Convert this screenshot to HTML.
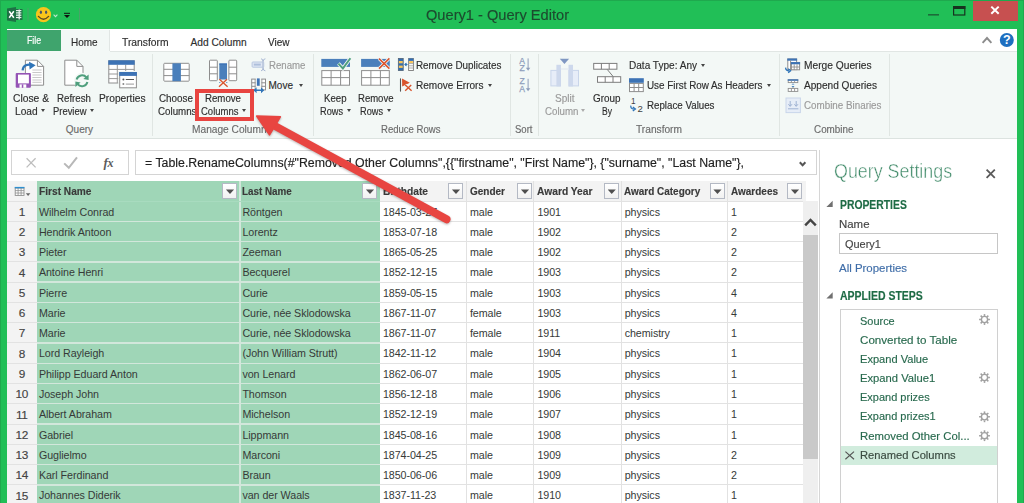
<!DOCTYPE html>
<html><head><meta charset="utf-8">
<style>
*{margin:0;padding:0;box-sizing:border-box}
html,body{width:1024px;height:503px;overflow:hidden;background:#21bf57;font-family:"Liberation Sans",sans-serif;}
.a{position:absolute}
.t{position:absolute;white-space:nowrap;line-height:normal;-webkit-text-stroke:0.15px;transform-origin:0 50%}
.sep{position:absolute;top:53.5px;width:1px;height:82px;background:#e0e6e3}
.dd{position:absolute;top:183px;width:15.3px;height:15.5px;background:linear-gradient(#fff,#f1f1f1);border:1px solid #b4b9c4}
.dd:after{content:"";position:absolute;left:2.9px;top:5.4px;width:8.2px;height:4.6px;background:#4f4f4f;clip-path:polygon(0 0,100% 0,50% 100%)}
.car{position:absolute;width:0;height:0;border:2.5px solid transparent;border-top:3px solid #444;border-bottom:0}
svg{position:absolute;overflow:visible}
</style></head><body>
<!-- title bar -->
<div class="a" style="left:0;top:0;width:1024px;height:1px;background:#1fa94e"></div>
<div class="a" style="left:0;top:0;width:1px;height:503px;background:#1fa94e"></div>
<div class="a" style="left:1023px;top:0;width:1px;height:503px;background:#1fa94e"></div>
<div class="a" style="left:973px;top:1px;width:45px;height:19.7px;background:#c75050"></div>
<div class="a" style="left:7px;top:29.3px;width:1010px;height:474px;background:#fff"></div>
<!-- tabs -->
<div class="a" style="left:7px;top:29.5px;width:54px;height:21.2px;background:#3fa46d"></div>
<div class="a" style="left:61px;top:30px;width:49px;height:22px;background:#f3f8f6;border-right:1px solid #e1e6e4"></div>
<!-- ribbon -->
<div class="a" style="left:7px;top:51px;width:1010px;height:88px;background:#f3f8f6;border-bottom:1px solid #dce3e0"></div>
<div class="a" style="left:110px;top:51px;width:907px;height:1px;background:#e1e6e4"></div>
<div class="sep" style="left:152px"></div>
<div class="sep" style="left:313px"></div>
<div class="sep" style="left:510px"></div>
<div class="sep" style="left:538.3px"></div>
<div class="sep" style="left:779.3px"></div>
<div class="sep" style="left:889px"></div>
<!-- formula bar -->
<div class="a" style="left:11px;top:150px;width:118px;height:25px;border:1px solid #d4d4d4;background:#fff"></div>
<div class="a" style="left:135px;top:150px;width:682px;height:25px;border:1px solid #d4d4d4;background:#fff"></div>
<!-- table -->
<div class="a" style="left:7px;top:181px;width:799px;height:20px;background:#f3f3f3"></div>
<div class="a" style="left:7px;top:201px;width:30px;height:302px;background:#f3f3f3"></div>
<div class="a" style="left:37px;top:181px;width:343px;height:322px;background:#9fd6b7"></div>
<div class="a" style="left:7px;top:220.78px;width:796px;height:1px;background:#e2e2e2"></div>
<div class="a" style="left:37px;top:220.58px;width:343px;height:1.4px;background:#d2e7db"></div>
<div class="a" style="left:7px;top:241.06px;width:796px;height:1px;background:#e2e2e2"></div>
<div class="a" style="left:37px;top:240.86px;width:343px;height:1.4px;background:#d2e7db"></div>
<div class="a" style="left:7px;top:261.34px;width:796px;height:1px;background:#e2e2e2"></div>
<div class="a" style="left:37px;top:261.14px;width:343px;height:1.4px;background:#d2e7db"></div>
<div class="a" style="left:7px;top:281.62px;width:796px;height:1px;background:#e2e2e2"></div>
<div class="a" style="left:37px;top:281.42px;width:343px;height:1.4px;background:#d2e7db"></div>
<div class="a" style="left:7px;top:301.90px;width:796px;height:1px;background:#e2e2e2"></div>
<div class="a" style="left:37px;top:301.70px;width:343px;height:1.4px;background:#d2e7db"></div>
<div class="a" style="left:7px;top:322.18px;width:796px;height:1px;background:#e2e2e2"></div>
<div class="a" style="left:37px;top:321.98px;width:343px;height:1.4px;background:#d2e7db"></div>
<div class="a" style="left:7px;top:342.46px;width:796px;height:1px;background:#e2e2e2"></div>
<div class="a" style="left:37px;top:342.26px;width:343px;height:1.4px;background:#d2e7db"></div>
<div class="a" style="left:7px;top:362.74px;width:796px;height:1px;background:#e2e2e2"></div>
<div class="a" style="left:37px;top:362.54px;width:343px;height:1.4px;background:#d2e7db"></div>
<div class="a" style="left:7px;top:383.02px;width:796px;height:1px;background:#e2e2e2"></div>
<div class="a" style="left:37px;top:382.82px;width:343px;height:1.4px;background:#d2e7db"></div>
<div class="a" style="left:7px;top:403.30px;width:796px;height:1px;background:#e2e2e2"></div>
<div class="a" style="left:37px;top:403.10px;width:343px;height:1.4px;background:#d2e7db"></div>
<div class="a" style="left:7px;top:423.58px;width:796px;height:1px;background:#e2e2e2"></div>
<div class="a" style="left:37px;top:423.38px;width:343px;height:1.4px;background:#d2e7db"></div>
<div class="a" style="left:7px;top:443.86px;width:796px;height:1px;background:#e2e2e2"></div>
<div class="a" style="left:37px;top:443.66px;width:343px;height:1.4px;background:#d2e7db"></div>
<div class="a" style="left:7px;top:464.14px;width:796px;height:1px;background:#e2e2e2"></div>
<div class="a" style="left:37px;top:463.94px;width:343px;height:1.4px;background:#d2e7db"></div>
<div class="a" style="left:7px;top:484.42px;width:796px;height:1px;background:#e2e2e2"></div>
<div class="a" style="left:37px;top:484.22px;width:343px;height:1.4px;background:#d2e7db"></div>
<div class="a" style="left:7px;top:504.70px;width:796px;height:1px;background:#e2e2e2"></div>
<div class="a" style="left:37px;top:504.50px;width:343px;height:1.4px;background:#d2e7db"></div>
<div class="a" style="left:465.50px;top:181px;width:1px;height:322px;background:#e2e2e2"></div>
<div class="a" style="left:533.25px;top:181px;width:1px;height:322px;background:#e2e2e2"></div>
<div class="a" style="left:620.75px;top:181px;width:1px;height:322px;background:#e2e2e2"></div>
<div class="a" style="left:726.75px;top:181px;width:1px;height:322px;background:#e2e2e2"></div>
<div class="a" style="left:239.3px;top:181px;width:1.4px;height:322px;background:#d2e7db"></div>
<div class="a" style="left:7px;top:200.5px;width:796px;height:1px;background:#e2e2e2"></div>
<div class="a" style="left:37px;top:200.5px;width:343px;height:1px;background:#a8dbbf"></div>
<div class="dd" style="left:222px"></div>
<div class="dd" style="left:362px"></div>
<div class="dd" style="left:448px"></div>
<div class="dd" style="left:517px"></div>
<div class="dd" style="left:603.75px"></div>
<div class="dd" style="left:709.5px"></div>
<div class="dd" style="left:787px"></div>
<div class="car" style="left:41.0px;top:109.3px"></div>
<div class="car" style="left:90.0px;top:109.3px"></div>
<div class="car" style="left:241.9px;top:109.3px"></div>
<div class="car" style="left:347.3px;top:109.3px"></div>
<div class="car" style="left:386.5px;top:109.3px"></div>
<div class="car" style="left:298.5px;top:83.8px"></div>
<div class="car" style="left:488.0px;top:83.8px"></div>
<div class="car" style="left:700.5px;top:63.8px"></div>
<div class="car" style="left:767.3px;top:83.8px"></div>
<div class="car" style="left:581.2px;top:109.3px;border-top-color:#aaa"></div>
<!-- scrollbar -->
<div class="a" style="left:803px;top:201px;width:15px;height:302px;background:#efefef"></div>
<div class="a" style="left:803px;top:235px;width:15px;height:224px;background:#c9c9c9"></div>
<!-- panel -->
<div class="a" style="left:819px;top:150px;width:1px;height:353px;background:#d6d6d6"></div>
<div class="a" style="left:839px;top:233px;width:159px;height:21px;border:1px solid #c6c6c6;background:#fff"></div>
<div class="a" style="left:840px;top:309px;width:158px;height:200px;border:1px solid #d0d0d0;background:#fff"></div>
<div class="a" style="left:841px;top:446.2px;width:156px;height:18.4px;background:#d1ecdd"></div>
<svg class="a" style="left:0;top:0" width="1024" height="503" viewBox="0 0 1024 503">
<!-- excel icon -->
<g>
<rect x="15" y="9" width="7.3" height="11" fill="#1e7145"/>
<g stroke="#f0f8f3" stroke-width="1.25" opacity="0.95">
<line x1="16" y1="10.6" x2="22" y2="10.6"/><line x1="16" y1="12.9" x2="22" y2="12.9"/><line x1="16" y1="15.2" x2="22" y2="15.2"/><line x1="16" y1="17.5" x2="22" y2="17.5"/><line x1="19.2" y1="9.5" x2="19.2" y2="19.5"/>
</g>
<rect x="21.4" y="9" width="0.9" height="11" fill="#1e7145"/>
<path d="M7 8.6 L16 6.9 L16 22 L7 20.4 Z" fill="#1e7145"/>
<path d="M9.2 11.2 L13.8 17.8 M13.8 11.2 L9.2 17.8" stroke="#fff" stroke-width="1.5" fill="none"/>
</g>
<!-- qat separators -->
<rect x="27.5" y="8" width="1" height="13.5" fill="#48a468"/>
<rect x="79" y="8" width="1" height="13.5" fill="#48a468"/>
<!-- smiley -->
<circle cx="43.5" cy="14.7" r="7.6" fill="#f9c51b"/>
<ellipse cx="40.9" cy="12.3" rx="1.1" ry="1.7" fill="#4a5568"/>
<ellipse cx="46.1" cy="12.3" rx="1.1" ry="1.7" fill="#4a5568"/>
<path d="M38.4 16.4 Q43.5 22 48.6 16.4" stroke="#5a4a20" stroke-width="1.4" fill="none" stroke-linecap="round"/>
<path d="M53.6 14.6 L55.5 16.6 L57.4 14.6" stroke="#bfe8cd" stroke-width="1.1" fill="none"/>
<rect x="64" y="12.8" width="6" height="1" fill="#111"/>
<path d="M64 15 L70 15 L67 18 Z" fill="#111"/>
<!-- window controls -->
<rect x="928" y="14" width="11" height="1.6" fill="#1d6b3a"/>
<rect x="953.6" y="6.6" width="11.2" height="8.4" fill="none" stroke="#17321f" stroke-width="1.2"/>
<rect x="953" y="6" width="12.4" height="3" fill="#17321f"/>
<path d="M991.3 6.6 L998.7 13.8 M998.7 6.6 L991.3 13.8" stroke="#fff" stroke-width="2" fill="none"/>
<!-- collapse caret & help -->
<path d="M982.6 42.8 L987 38 L991.4 42.8" stroke="#8c8c8c" stroke-width="1.9" fill="none"/>
<circle cx="1006.8" cy="40" r="7" fill="#1e6fc0"/>
<text x="1006.8" y="44.4" font-family="Liberation Sans" font-weight="bold" font-size="12.5" fill="#fff" text-anchor="middle">?</text>

<!-- Close & Load -->
<path d="M25.4 60.2 H37.4 L43.6 66.4 V85.2 H25.4 Z" fill="#fff" stroke="#8e8e8e" stroke-width="1"/>
<path d="M37.4 60.2 V66.4 H43.6" fill="none" stroke="#8e8e8e" stroke-width="1"/>
<g stroke="#c9c9c9" stroke-width="1"><line x1="32.4" y1="70" x2="41.6" y2="70"/><line x1="32.4" y1="72.5" x2="41.6" y2="72.5"/><line x1="32.4" y1="75" x2="41.6" y2="75"/><line x1="32.4" y1="77.5" x2="41.6" y2="77.5"/><line x1="32.4" y1="80" x2="41.6" y2="80"/><line x1="32.4" y1="82.3" x2="41.6" y2="82.3"/></g>
<rect x="15.7" y="72.9" width="15.2" height="14.9" rx="1" fill="#9454b5"/>
<rect x="18" y="74.6" width="10.9" height="8.8" fill="#fff"/>
<rect x="19.5" y="84.4" width="6.8" height="3.4" fill="#fff"/>
<rect x="21.8" y="84.4" width="1.5" height="3.4" fill="#9454b5"/>
<path d="M22.6 70.4 C23 65.5 27 64.2 30.5 64.6" fill="none" stroke="#2f74b8" stroke-width="2.2"/>
<path d="M29 61.8 L35.6 65.3 L29.6 69.6 Z" fill="#2f74b8"/>

<!-- Refresh Preview -->
<path d="M64.8 60.2 H76.8 L83 66.4 V85.2 H64.8 Z" fill="#fff" stroke="#8e8e8e" stroke-width="1"/>
<path d="M76.8 60.2 V66.4 H83" fill="none" stroke="#8e8e8e" stroke-width="1"/>
<circle cx="82" cy="80.8" r="8" fill="#f3f8f6"/>
<path d="M76.6 79.6 A5.6 5.6 0 0 1 86.4 77.4" fill="none" stroke="#4f9f7d" stroke-width="2"/>
<path d="M88.6 74.6 L88.6 80 L83.4 79 Z" fill="#4f9f7d"/>
<path d="M87.4 82 A5.6 5.6 0 0 1 77.6 84.2" fill="none" stroke="#4f9f7d" stroke-width="2"/>
<path d="M75.4 87 L75.4 81.6 L80.6 82.6 Z" fill="#4f9f7d"/>

<!-- Properties -->
<rect x="108.8" y="60.8" width="25.4" height="22.2" fill="#fff" stroke="#8e8e8e" stroke-width="1"/>
<g stroke="#9a9a9a" stroke-width="1"><line x1="117.3" y1="64.7" x2="117.3" y2="83"/><line x1="125.7" y1="64.7" x2="125.7" y2="83"/><line x1="108.8" y1="69.4" x2="134.2" y2="69.4"/><line x1="108.8" y1="74" x2="134.2" y2="74"/><line x1="108.8" y1="78.6" x2="134.2" y2="78.6"/></g>
<rect x="108.3" y="60.3" width="26.4" height="4.5" fill="#3d73b5"/>
<rect x="118.2" y="71" width="19.7" height="18.3" fill="#f3f8f6"/>
<rect x="119.7" y="72.5" width="16.7" height="15.3" fill="#fff" stroke="#8e8e8e" stroke-width="1"/>
<rect x="119.2" y="72" width="17.7" height="3.9" fill="#3d73b5"/>
<circle cx="123.4" cy="79.5" r="1" fill="#555"/><circle cx="123.4" cy="84.1" r="1" fill="#888"/>
<line x1="125.8" y1="79.5" x2="134" y2="79.5" stroke="#555" stroke-width="1"/>
<line x1="125.8" y1="84.1" x2="134" y2="84.1" stroke="#999" stroke-width="1"/>

<!-- Choose Columns -->
<rect x="163.8" y="63.3" width="25.4" height="17.9" rx="0.8" fill="#fff" stroke="#8e8e8e" stroke-width="1"/>
<g stroke="#8e8e8e" stroke-width="1"><line x1="163.8" y1="69.3" x2="189.2" y2="69.3"/><line x1="163.8" y1="75.6" x2="189.2" y2="75.6"/></g>
<rect x="172.4" y="63.3" width="8.5" height="17.9" fill="#4a7fbb"/>

<!-- Remove Columns -->
<rect x="209.5" y="60.2" width="7.8" height="20.5" rx="0.8" fill="#fff" stroke="#8e8e8e" stroke-width="1"/>
<rect x="228.9" y="60.2" width="7.8" height="20.5" rx="0.8" fill="#fff" stroke="#8e8e8e" stroke-width="1"/>
<g stroke="#8e8e8e" stroke-width="1"><line x1="209.5" y1="67.2" x2="217.3" y2="67.2"/><line x1="209.5" y1="73.8" x2="217.3" y2="73.8"/><line x1="228.9" y1="67.2" x2="236.7" y2="67.2"/><line x1="228.9" y1="73.8" x2="236.7" y2="73.8"/></g>
<rect x="219.3" y="63.5" width="7.7" height="16" fill="#4a7fbb"/>
<rect x="219.3" y="63.5" width="7.7" height="1.2" fill="#3d73b5"/>
<path d="M219.4 79.2 L227.6 86.8 M227 79.2 L219 86.8" stroke="#d9532c" stroke-width="1.3" fill="none"/>
<rect x="219.3" y="82" width="1" height="1" fill="#4a7fbb"/><rect x="226.3" y="82" width="1" height="1" fill="#4a7fbb"/>

<!-- Rename -->
<rect x="252.1" y="62" width="12" height="5.2" rx="0.8" fill="#dfe7f3" stroke="#b7c7e0" stroke-width="1"/>
<rect x="253.8" y="63.6" width="7" height="2" fill="#aebfdb"/>
<path d="M261 58.8 Q263 59 263 61 V68.6 Q263 70.6 261 70.8 M265.4 58.8 Q263.2 59 263.2 61 M265.4 70.8 Q263.2 70.6 263.2 68.6" stroke="#aab9d4" stroke-width="1" fill="none"/>
<rect x="262.6" y="61" width="2.6" height="7" fill="#f3f8f6" opacity="0.6"/>
<line x1="263.1" y1="60" x2="263.1" y2="69.6" stroke="#aab9d4" stroke-width="1"/>

<!-- Move -->
<rect x="251.7" y="79.1" width="13.8" height="10.8" fill="#fff" stroke="#8e8e8e" stroke-width="1"/>
<g stroke="#8e8e8e" stroke-width="1"><line x1="255.2" y1="79" x2="255.2" y2="90"/><line x1="261.8" y1="79" x2="261.8" y2="90"/><line x1="251.7" y1="82.8" x2="265.5" y2="82.8"/><line x1="251.7" y1="86.3" x2="265.5" y2="86.3"/></g>
<rect x="255.8" y="78" width="5.4" height="13" fill="#f3f8f6"/>
<rect x="256.9" y="78.4" width="2.8" height="7.4" fill="#3d73b5"/>
<path d="M253.4 90.2 L256.6 87.2 V89.4 H261 V87.2 L264.2 90.2 L261 93.2 V91 H256.6 V93.2 Z" fill="#2f74b8"/>

<!-- Keep Rows -->
<rect x="321.3" y="58.9" width="28.7" height="8" fill="#4a7fbb"/>
<rect x="321.8" y="70.6" width="27.7" height="14.6" fill="#fff" stroke="#8e8e8e" stroke-width="1"/>
<g stroke="#8e8e8e" stroke-width="1"><line x1="331.1" y1="70.6" x2="331.1" y2="85.2"/><line x1="340.6" y1="70.6" x2="340.6" y2="85.2"/><line x1="321.8" y1="77.6" x2="349.5" y2="77.6"/></g>
<path d="M338.4 63.6 L342.9 68.4 L350.4 58.2" stroke="#f3f8f6" stroke-width="3.6" fill="none"/>
<path d="M338.4 63.6 L342.9 68.4 L350.4 58.2" stroke="#4f9f7d" stroke-width="1.9" fill="none"/>

<!-- Remove Rows -->
<rect x="361.1" y="58.9" width="28.7" height="8" fill="#4a7fbb"/>
<rect x="361.6" y="70.6" width="27.7" height="14.6" fill="#fff" stroke="#8e8e8e" stroke-width="1"/>
<g stroke="#8e8e8e" stroke-width="1"><line x1="370.9" y1="70.6" x2="370.9" y2="85.2"/><line x1="380.4" y1="70.6" x2="380.4" y2="85.2"/><line x1="361.6" y1="77.6" x2="389.3" y2="77.6"/></g>
<path d="M379 58.6 L389.4 68.6 M389.4 58.4 L379 68.6" stroke="#f3f8f6" stroke-width="3.2" fill="none"/>
<path d="M379 58.6 L389.4 68.6 M389.4 58.4 L379 68.6" stroke="#d9532c" stroke-width="1.5" fill="none"/>
</svg>
<svg class="a" style="left:0;top:0" width="1024" height="503" viewBox="0 0 1024 503">
<!-- Remove Duplicates -->
<rect x="398.4" y="58.5" width="4.8" height="12" fill="#2f6db5" stroke="#54697f" stroke-width="0.9"/>
<rect x="398.9" y="61" width="3.8" height="2.3" fill="#f7c55c"/><rect x="398.9" y="65.6" width="3.8" height="2.3" fill="#f7c55c"/>
<rect x="408.6" y="58.5" width="4.8" height="12" fill="#fff" stroke="#7a7a7a" stroke-width="0.9"/>
<rect x="408.6" y="58.5" width="4.8" height="2.4" fill="#2f6db5"/>
<rect x="409.1" y="61" width="3.8" height="2.3" fill="#f7c55c"/>
<line x1="408.6" y1="63.6" x2="413.4" y2="63.6" stroke="#9a9a9a" stroke-width="0.8"/><line x1="408.6" y1="65.8" x2="413.4" y2="65.8" stroke="#9a9a9a" stroke-width="0.8"/><line x1="408.6" y1="68" x2="413.4" y2="68" stroke="#9a9a9a" stroke-width="0.8"/>
<path d="M405.6 64.5 H407.6 M406.2 63.2 L404.6 64.5 L406.2 65.8 Z" stroke="#2f74b8" stroke-width="0.9" fill="#2f74b8"/>
<!-- Remove Errors -->
<line x1="400.5" y1="78.4" x2="400.5" y2="91.6" stroke="#555" stroke-width="1.1"/>
<path d="M402 78.6 L409.8 82.8 L402.2 86.6 Z" fill="#d9532c"/>
<path d="M405 84.8 L411.6 90.8 M411.2 85 L405.2 90.8" stroke="#f3f8f6" stroke-width="3" fill="none"/>
<path d="M405 84.8 L411.6 90.8 M411.2 85 L405.2 90.8" stroke="#d9532c" stroke-width="1.4" fill="none"/>

<!-- Sort icons -->
<g font-family="Liberation Sans" font-size="8.6" fill="#8d9dbb" text-anchor="middle" stroke="#8d9dbb" stroke-width="0.25">
<text x="522.1" y="64.1">A</text><text x="522.1" y="71.3">Z</text>
<text x="522.1" y="83.7">Z</text><text x="522.1" y="91.6">A</text>
</g>
<path d="M528.1 58.4 V69" stroke="#8d9dbb" stroke-width="1" fill="none"/><path d="M525.9 67.8 H530.3 L528.1 70.8 Z" fill="#8d9dbb"/>
<path d="M528.1 78.8 V89.4" stroke="#8d9dbb" stroke-width="1" fill="none"/><path d="M525.9 88.2 H530.3 L528.1 91.2 Z" fill="#8d9dbb"/>

<!-- Split Column -->
<rect x="550.9" y="70.4" width="9.5" height="15.5" fill="#e7edf8" stroke="#c9d5ea" stroke-width="1"/>
<rect x="569" y="70.4" width="9.5" height="15.5" fill="#e7edf8" stroke="#c9d5ea" stroke-width="1"/>
<rect x="556.4" y="64.8" width="4.5" height="21.6" fill="#cdd8ec"/>
<rect x="568.5" y="64.8" width="4.5" height="21.6" fill="#cdd8ec"/>
<path d="M559.8 58.8 H569.1 L564.45 64 Z" fill="#7f97c2"/>
<line x1="561" y1="69" x2="568.5" y2="69" stroke="#dfe6f0" stroke-width="1"/>

<!-- Group By -->
<rect x="593.7" y="63.4" width="23.2" height="5.8" fill="#fff" stroke="#7d7d7d" stroke-width="1"/>
<line x1="601.4" y1="63.4" x2="601.4" y2="69.2" stroke="#7d7d7d"/><line x1="609.2" y1="63.4" x2="609.2" y2="69.2" stroke="#7d7d7d"/>
<rect x="597.5" y="76.7" width="23.2" height="5.6" fill="#fff" stroke="#7d7d7d" stroke-width="1"/>
<line x1="605.2" y1="76.7" x2="605.2" y2="82.3" stroke="#7d7d7d"/><line x1="613" y1="76.7" x2="613" y2="82.3" stroke="#7d7d7d"/>
<line x1="607.2" y1="69.4" x2="613.2" y2="76.6" stroke="#7d7d7d" stroke-width="1"/>

<!-- Use first row -->
<rect x="629.5" y="83.4" width="13.8" height="8.2" fill="#fff" stroke="#8e8e8e" stroke-width="1"/>
<g stroke="#8e8e8e" stroke-width="1"><line x1="634.1" y1="83.4" x2="634.1" y2="91.6"/><line x1="638.7" y1="83.4" x2="638.7" y2="91.6"/><line x1="629.5" y1="87.5" x2="643.3" y2="87.5"/></g>
<rect x="629" y="78.2" width="14.8" height="4.6" fill="#3d73b5"/>

<!-- Replace values -->
<g font-family="Liberation Sans" fill="#3f3f3f">
<text x="630.9" y="104.3" font-size="8.2">1</text>
<text x="637.4" y="111.5" font-size="9.6">2</text>
</g>
<path d="M630.8 105.6 Q630.6 109 633.6 109 M632.8 107 L635.4 109 L632.8 111" stroke="#2f74b8" stroke-width="1.3" fill="none"/>

<!-- Merge queries -->
<rect x="787.8" y="59" width="8.8" height="10.6" fill="#fff" stroke="#8e8e8e" stroke-width="1"/>
<rect x="787.3" y="58.5" width="9.8" height="2.2" fill="#3d73b5"/>
<line x1="790.6" y1="60.5" x2="790.6" y2="69.6" stroke="#8e8e8e"/>
<rect x="791.4" y="62.6" width="8.2" height="7.2" fill="#fff" stroke="#8e8e8e" stroke-width="1"/>
<rect x="790.9" y="62.1" width="9.2" height="2.2" fill="#3d73b5"/>
<g stroke="#8e8e8e" stroke-width="0.9"><line x1="794.2" y1="64.3" x2="794.2" y2="69.8"/><line x1="797" y1="64.3" x2="797" y2="69.8"/><line x1="791.4" y1="67" x2="799.6" y2="67"/></g>
<path d="M785.6 67.6 Q785.8 70.8 789 70.8 M788.2 68.8 L790.6 70.8 L788.2 72.8" stroke="#2f74b8" stroke-width="1.3" fill="none"/>

<!-- Append queries -->
<rect x="788.2" y="79.8" width="9.6" height="2.8" fill="#fff" stroke="#8e8e8e" stroke-width="0.9"/>
<rect x="787.7" y="79.3" width="10.6" height="1.5" fill="#3d73b5"/>
<line x1="791.4" y1="80.8" x2="791.4" y2="82.6" stroke="#8e8e8e" stroke-width="0.9"/><line x1="794.6" y1="80.8" x2="794.6" y2="82.6" stroke="#8e8e8e" stroke-width="0.9"/>
<path d="M791.4 84.6 L793 83.4 L794.6 84.6 Z M791.4 86 L793 87.2 L794.6 86 Z" fill="#2f74b8"/>
<rect x="788.2" y="88.4" width="9.6" height="3" fill="#fff" stroke="#8e8e8e" stroke-width="0.9"/>
<line x1="791.4" y1="88.4" x2="791.4" y2="91.4" stroke="#8e8e8e" stroke-width="0.9"/><line x1="794.6" y1="88.4" x2="794.6" y2="91.4" stroke="#8e8e8e" stroke-width="0.9"/>
<line x1="793" y1="87" x2="793" y2="88.4" stroke="#8e8e8e" stroke-width="0.9"/>

<!-- Combine binaries -->
<rect x="786" y="98" width="14.4" height="14.6" fill="#e6edf7" stroke="#c9d6ea" stroke-width="1"/>
<path d="M790.2 101 V106 M788.4 104.2 L790.2 106.4 L792 104.2 M796.2 101 V106 M794.4 104.2 L796.2 106.4 L798 104.2" stroke="#9fb2d3" stroke-width="1" fill="none"/>
<line x1="788" y1="108.8" x2="798.4" y2="108.8" stroke="#9fb2d3" stroke-width="1"/>

<!-- formula bar icons -->
<path d="M26.6 158.2 L35.6 167.4 M35.6 158.2 L26.6 167.4" stroke="#bdbdbd" stroke-width="1.3" fill="none"/>
<path d="M64.2 163.4 L68.8 167.8 L77 157.4" stroke="#b8b8b8" stroke-width="2" fill="none"/>
<text x="103.6" y="167.3" font-family="Liberation Serif" font-style="italic" font-weight="bold" font-size="13" fill="#5c5c5c">f</text>
<text x="107.6" y="167.3" font-family="Liberation Serif" font-style="italic" font-weight="bold" font-size="12" fill="#5c5c5c">x</text>
<path d="M799.8 162.2 L802.6 165.2 L805.4 162.2" stroke="#555" stroke-width="2" fill="none"/>

<!-- table corner icon -->
<rect x="15.2" y="188" width="8.8" height="7.4" fill="#fff" stroke="#8e8e8e" stroke-width="0.9"/>
<g stroke="#8e8e8e" stroke-width="0.8"><line x1="18.1" y1="188" x2="18.1" y2="195.4"/><line x1="21.1" y1="188" x2="21.1" y2="195.4"/><line x1="15.2" y1="190.6" x2="24" y2="190.6"/><line x1="15.2" y1="193" x2="24" y2="193"/></g>
<rect x="14.7" y="186.9" width="9.8" height="1.4" fill="#2f8fd0"/>
<path d="M25.8 193.2 H30.4 L28.1 196 Z" fill="#666"/>

<!-- scrollbar chevron -->
<path d="M805.2 225.4 L810.5 220 L815.8 225.4" stroke="#444" stroke-width="2.4" fill="none"/>

<!-- panel icons -->
<path d="M986.6 169.6 L994.8 177.8 M994.8 169.6 L986.6 177.8" stroke="#5a5a5a" stroke-width="1.8" fill="none"/>
<path d="M832.7 200.8 V207.1 H826.4 Z" fill="#707070"/>
<path d="M832.7 292.2 V298.5 H826.4 Z" fill="#707070"/>
<path d="M845.4 451.6 L854 459.2 M854 451.6 L845.4 459.2" stroke="#555" stroke-width="1.15" fill="none"/>
<g><circle cx="984.5" cy="319.5" r="3.1" fill="none" stroke="#a0a0a0" stroke-width="1.4"/><line x1="988.10" y1="319.50" x2="989.90" y2="319.50" stroke="#a0a0a0" stroke-width="1.6"/><line x1="987.05" y1="322.05" x2="988.32" y2="323.32" stroke="#a0a0a0" stroke-width="1.6"/><line x1="984.50" y1="323.10" x2="984.50" y2="324.90" stroke="#a0a0a0" stroke-width="1.6"/><line x1="981.95" y1="322.05" x2="980.68" y2="323.32" stroke="#a0a0a0" stroke-width="1.6"/><line x1="980.90" y1="319.50" x2="979.10" y2="319.50" stroke="#a0a0a0" stroke-width="1.6"/><line x1="981.95" y1="316.95" x2="980.68" y2="315.68" stroke="#a0a0a0" stroke-width="1.6"/><line x1="984.50" y1="315.90" x2="984.50" y2="314.10" stroke="#a0a0a0" stroke-width="1.6"/><line x1="987.05" y1="316.95" x2="988.32" y2="315.68" stroke="#a0a0a0" stroke-width="1.6"/><circle cx="984.5" cy="377.5" r="3.1" fill="none" stroke="#a0a0a0" stroke-width="1.4"/><line x1="988.10" y1="377.50" x2="989.90" y2="377.50" stroke="#a0a0a0" stroke-width="1.6"/><line x1="987.05" y1="380.05" x2="988.32" y2="381.32" stroke="#a0a0a0" stroke-width="1.6"/><line x1="984.50" y1="381.10" x2="984.50" y2="382.90" stroke="#a0a0a0" stroke-width="1.6"/><line x1="981.95" y1="380.05" x2="980.68" y2="381.32" stroke="#a0a0a0" stroke-width="1.6"/><line x1="980.90" y1="377.50" x2="979.10" y2="377.50" stroke="#a0a0a0" stroke-width="1.6"/><line x1="981.95" y1="374.95" x2="980.68" y2="373.68" stroke="#a0a0a0" stroke-width="1.6"/><line x1="984.50" y1="373.90" x2="984.50" y2="372.10" stroke="#a0a0a0" stroke-width="1.6"/><line x1="987.05" y1="374.95" x2="988.32" y2="373.68" stroke="#a0a0a0" stroke-width="1.6"/><circle cx="984.5" cy="416.8" r="3.1" fill="none" stroke="#a0a0a0" stroke-width="1.4"/><line x1="988.10" y1="416.80" x2="989.90" y2="416.80" stroke="#a0a0a0" stroke-width="1.6"/><line x1="987.05" y1="419.35" x2="988.32" y2="420.62" stroke="#a0a0a0" stroke-width="1.6"/><line x1="984.50" y1="420.40" x2="984.50" y2="422.20" stroke="#a0a0a0" stroke-width="1.6"/><line x1="981.95" y1="419.35" x2="980.68" y2="420.62" stroke="#a0a0a0" stroke-width="1.6"/><line x1="980.90" y1="416.80" x2="979.10" y2="416.80" stroke="#a0a0a0" stroke-width="1.6"/><line x1="981.95" y1="414.25" x2="980.68" y2="412.98" stroke="#a0a0a0" stroke-width="1.6"/><line x1="984.50" y1="413.20" x2="984.50" y2="411.40" stroke="#a0a0a0" stroke-width="1.6"/><line x1="987.05" y1="414.25" x2="988.32" y2="412.98" stroke="#a0a0a0" stroke-width="1.6"/><circle cx="984.5" cy="435.7" r="3.1" fill="none" stroke="#a0a0a0" stroke-width="1.4"/><line x1="988.10" y1="435.70" x2="989.90" y2="435.70" stroke="#a0a0a0" stroke-width="1.6"/><line x1="987.05" y1="438.25" x2="988.32" y2="439.52" stroke="#a0a0a0" stroke-width="1.6"/><line x1="984.50" y1="439.30" x2="984.50" y2="441.10" stroke="#a0a0a0" stroke-width="1.6"/><line x1="981.95" y1="438.25" x2="980.68" y2="439.52" stroke="#a0a0a0" stroke-width="1.6"/><line x1="980.90" y1="435.70" x2="979.10" y2="435.70" stroke="#a0a0a0" stroke-width="1.6"/><line x1="981.95" y1="433.15" x2="980.68" y2="431.88" stroke="#a0a0a0" stroke-width="1.6"/><line x1="984.50" y1="432.10" x2="984.50" y2="430.30" stroke="#a0a0a0" stroke-width="1.6"/><line x1="987.05" y1="433.15" x2="988.32" y2="431.88" stroke="#a0a0a0" stroke-width="1.6"/></g>
</svg>

<div class="t" style="left:426.00px;top:6.00px;font-size:15px;color:#1d4a2f;transform:scaleX(0.9747);">Query1 - Query Editor</div>
<div class="t" style="left:26.60px;top:35.00px;font-size:10.2px;color:#ffffff;transform:scaleX(0.8586);">File</div>
<div class="t" style="left:71.40px;top:37.00px;font-size:10.2px;color:#2e2e2e;transform:scaleX(0.9784);">Home</div>
<div class="t" style="left:122.00px;top:37.00px;font-size:10.2px;color:#2e2e2e;transform:scaleX(1.0098);">Transform</div>
<div class="t" style="left:190.50px;top:37.00px;font-size:10.2px;color:#2e2e2e;">Add Column</div>
<div class="t" style="left:268.00px;top:37.00px;font-size:10.2px;color:#2e2e2e;transform:scaleX(0.9815);">View</div>
<div class="t" style="left:13.00px;top:93.00px;font-size:10px;color:#2e2e2e;transform:scaleX(1.0281);">Close &amp;</div>
<div class="t" style="left:15.00px;top:106.00px;font-size:10px;color:#2e2e2e;transform:scaleX(1.0157);">Load</div>
<div class="t" style="left:56.50px;top:93.00px;font-size:10px;color:#2e2e2e;transform:scaleX(0.9710);">Refresh</div>
<div class="t" style="left:52.50px;top:106.00px;font-size:10px;color:#2e2e2e;transform:scaleX(0.9416);">Preview</div>
<div class="t" style="left:98.50px;top:93.00px;font-size:10px;color:#2e2e2e;transform:scaleX(1.0202);">Properties</div>
<div class="t" style="left:65.80px;top:124.00px;font-size:10px;color:#6b6b6b;">Query</div>
<div class="t" style="left:159.00px;top:93.00px;font-size:10px;color:#2e2e2e;transform:scaleX(0.9864);">Choose</div>
<div class="t" style="left:157.50px;top:106.00px;font-size:10px;color:#2e2e2e;transform:scaleX(0.9755);">Columns</div>
<div class="t" style="left:204.50px;top:93.00px;font-size:10px;color:#2e2e2e;transform:scaleX(0.9664);">Remove</div>
<div class="t" style="left:200.50px;top:106.00px;font-size:10px;color:#2e2e2e;transform:scaleX(0.9501);">Columns</div>
<div class="t" style="left:268.50px;top:60.00px;font-size:10px;color:#9a9a9a;transform:scaleX(0.9653);">Rename</div>
<div class="t" style="left:268.50px;top:80.00px;font-size:10px;color:#2e2e2e;">Move</div>
<div class="t" style="left:191.80px;top:124.00px;font-size:10px;color:#6b6b6b;transform:scaleX(1.0169);">Manage Columns</div>
<div class="t" style="left:324.00px;top:93.00px;font-size:10px;color:#2e2e2e;transform:scaleX(0.9632);">Keep</div>
<div class="t" style="left:320.00px;top:106.00px;font-size:10px;color:#2e2e2e;transform:scaleX(0.9194);">Rows</div>
<div class="t" style="left:357.50px;top:93.00px;font-size:10px;color:#2e2e2e;transform:scaleX(0.9530);">Remove</div>
<div class="t" style="left:359.50px;top:106.00px;font-size:10px;color:#2e2e2e;transform:scaleX(0.9194);">Rows</div>
<div class="t" style="left:416.00px;top:60.00px;font-size:10px;color:#2e2e2e;transform:scaleX(0.9859);">Remove Duplicates</div>
<div class="t" style="left:416.00px;top:80.00px;font-size:10px;color:#2e2e2e;transform:scaleX(1.0037);">Remove Errors</div>
<div class="t" style="left:381.00px;top:124.00px;font-size:10px;color:#6b6b6b;transform:scaleX(0.9556);">Reduce Rows</div>
<div class="t" style="left:514.50px;top:124.00px;font-size:10px;color:#6b6b6b;transform:scaleX(0.9540);">Sort</div>
<div class="t" style="left:554.50px;top:93.00px;font-size:10px;color:#9a9a9a;transform:scaleX(1.0024);">Split</div>
<div class="t" style="left:544.50px;top:106.00px;font-size:10px;color:#9a9a9a;transform:scaleX(0.9719);">Column</div>
<div class="t" style="left:593.00px;top:93.00px;font-size:10px;color:#2e2e2e;transform:scaleX(0.9893);">Group</div>
<div class="t" style="left:602.00px;top:106.00px;font-size:10px;color:#2e2e2e;transform:scaleX(0.8568);">By</div>
<div class="t" style="left:629.00px;top:60.00px;font-size:10px;color:#2e2e2e;transform:scaleX(1.0053);">Data Type: Any</div>
<div class="t" style="left:647.00px;top:80.00px;font-size:10px;color:#2e2e2e;transform:scaleX(0.9849);">Use First Row As Headers</div>
<div class="t" style="left:647.00px;top:100.00px;font-size:10px;color:#2e2e2e;transform:scaleX(0.9739);">Replace Values</div>
<div class="t" style="left:635.50px;top:124.00px;font-size:10px;color:#6b6b6b;transform:scaleX(1.0176);">Transform</div>
<div class="t" style="left:803.50px;top:60.00px;font-size:10px;color:#2e2e2e;transform:scaleX(1.0206);">Merge Queries</div>
<div class="t" style="left:803.50px;top:80.00px;font-size:10px;color:#2e2e2e;transform:scaleX(1.0099);">Append Queries</div>
<div class="t" style="left:803.50px;top:100.00px;font-size:10px;color:#9a9a9a;transform:scaleX(0.9818);">Combine Binaries</div>
<div class="t" style="left:813.50px;top:124.00px;font-size:10px;color:#6b6b6b;transform:scaleX(0.9867);">Combine</div>
<div class="t" style="left:145.00px;top:156.00px;font-size:12.3px;color:#222;transform:scaleX(1.0027);">= Table.RenameColumns(#"Removed Other Columns",{{"firstname", "First Name"}, {"surname", "Last Name"},</div>
<div class="t" style="left:38.50px;top:185.00px;font-size:10.8px;color:#3a3a3a;font-weight:bold;transform:scaleX(0.9406);">First Name</div>
<div class="t" style="left:242.00px;top:185.00px;font-size:10.8px;color:#3a3a3a;font-weight:bold;transform:scaleX(0.9110);">Last Name</div>
<div class="t" style="left:382.50px;top:185.00px;font-size:10.8px;color:#3a3a3a;font-weight:bold;transform:scaleX(0.9496);">Birthdate</div>
<div class="t" style="left:469.50px;top:185.00px;font-size:10.8px;color:#3a3a3a;font-weight:bold;transform:scaleX(0.9256);">Gender</div>
<div class="t" style="left:537.00px;top:185.00px;font-size:10.8px;color:#3a3a3a;font-weight:bold;transform:scaleX(0.9497);">Award Year</div>
<div class="t" style="left:624.25px;top:185.00px;font-size:10.8px;color:#3a3a3a;font-weight:bold;transform:scaleX(0.9230);">Award Category</div>
<div class="t" style="left:730.50px;top:185.00px;font-size:10.8px;color:#3a3a3a;font-weight:bold;transform:scaleX(0.9247);">Awardees</div>
<div class="t" style="left:38.90px;top:206.00px;font-size:10.7px;color:#363a38;letter-spacing:-0.050px;-webkit-text-stroke:0;">Wilhelm Conrad</div>
<div class="t" style="left:242.40px;top:206.00px;font-size:10.7px;color:#363a38;letter-spacing:-0.050px;-webkit-text-stroke:0;">Röntgen</div>
<div class="t" style="left:382.90px;top:206.00px;font-size:10.7px;color:#363a38;letter-spacing:-0.050px;-webkit-text-stroke:0;">1845-03-27</div>
<div class="t" style="left:469.90px;top:206.00px;font-size:10.7px;color:#363a38;letter-spacing:-0.050px;-webkit-text-stroke:0;">male</div>
<div class="t" style="left:537.40px;top:206.00px;font-size:10.7px;color:#363a38;letter-spacing:-0.050px;-webkit-text-stroke:0;">1901</div>
<div class="t" style="left:624.65px;top:206.00px;font-size:10.7px;color:#363a38;letter-spacing:-0.050px;-webkit-text-stroke:0;">physics</div>
<div class="t" style="left:730.90px;top:206.00px;font-size:10.7px;color:#363a38;letter-spacing:-0.050px;-webkit-text-stroke:0;">1</div>
<div class="t" style="left:21.80px;top:205.00px;font-size:11.8px;color:#444;letter-spacing:-0.300px;transform:translateX(-50%);">1</div>
<div class="t" style="left:38.90px;top:226.00px;font-size:10.7px;color:#363a38;letter-spacing:-0.050px;-webkit-text-stroke:0;">Hendrik Antoon</div>
<div class="t" style="left:242.40px;top:226.00px;font-size:10.7px;color:#363a38;letter-spacing:-0.050px;-webkit-text-stroke:0;">Lorentz</div>
<div class="t" style="left:382.90px;top:226.00px;font-size:10.7px;color:#363a38;letter-spacing:-0.050px;-webkit-text-stroke:0;">1853-07-18</div>
<div class="t" style="left:469.90px;top:226.00px;font-size:10.7px;color:#363a38;letter-spacing:-0.050px;-webkit-text-stroke:0;">male</div>
<div class="t" style="left:537.40px;top:226.00px;font-size:10.7px;color:#363a38;letter-spacing:-0.050px;-webkit-text-stroke:0;">1902</div>
<div class="t" style="left:624.65px;top:226.00px;font-size:10.7px;color:#363a38;letter-spacing:-0.050px;-webkit-text-stroke:0;">physics</div>
<div class="t" style="left:730.90px;top:226.00px;font-size:10.7px;color:#363a38;letter-spacing:-0.050px;-webkit-text-stroke:0;">2</div>
<div class="t" style="left:21.80px;top:225.00px;font-size:11.8px;color:#444;letter-spacing:-0.300px;transform:translateX(-50%);">2</div>
<div class="t" style="left:38.90px;top:246.00px;font-size:10.7px;color:#363a38;letter-spacing:-0.050px;-webkit-text-stroke:0;">Pieter</div>
<div class="t" style="left:242.40px;top:246.00px;font-size:10.7px;color:#363a38;letter-spacing:-0.050px;-webkit-text-stroke:0;">Zeeman</div>
<div class="t" style="left:382.90px;top:246.00px;font-size:10.7px;color:#363a38;letter-spacing:-0.050px;-webkit-text-stroke:0;">1865-05-25</div>
<div class="t" style="left:469.90px;top:246.00px;font-size:10.7px;color:#363a38;letter-spacing:-0.050px;-webkit-text-stroke:0;">male</div>
<div class="t" style="left:537.40px;top:246.00px;font-size:10.7px;color:#363a38;letter-spacing:-0.050px;-webkit-text-stroke:0;">1902</div>
<div class="t" style="left:624.65px;top:246.00px;font-size:10.7px;color:#363a38;letter-spacing:-0.050px;-webkit-text-stroke:0;">physics</div>
<div class="t" style="left:730.90px;top:246.00px;font-size:10.7px;color:#363a38;letter-spacing:-0.050px;-webkit-text-stroke:0;">2</div>
<div class="t" style="left:21.80px;top:245.00px;font-size:11.8px;color:#444;letter-spacing:-0.300px;transform:translateX(-50%);">3</div>
<div class="t" style="left:38.90px;top:266.00px;font-size:10.7px;color:#363a38;letter-spacing:-0.050px;-webkit-text-stroke:0;">Antoine Henri</div>
<div class="t" style="left:242.40px;top:266.00px;font-size:10.7px;color:#363a38;letter-spacing:-0.050px;-webkit-text-stroke:0;">Becquerel</div>
<div class="t" style="left:382.90px;top:266.00px;font-size:10.7px;color:#363a38;letter-spacing:-0.050px;-webkit-text-stroke:0;">1852-12-15</div>
<div class="t" style="left:469.90px;top:266.00px;font-size:10.7px;color:#363a38;letter-spacing:-0.050px;-webkit-text-stroke:0;">male</div>
<div class="t" style="left:537.40px;top:266.00px;font-size:10.7px;color:#363a38;letter-spacing:-0.050px;-webkit-text-stroke:0;">1903</div>
<div class="t" style="left:624.65px;top:266.00px;font-size:10.7px;color:#363a38;letter-spacing:-0.050px;-webkit-text-stroke:0;">physics</div>
<div class="t" style="left:730.90px;top:266.00px;font-size:10.7px;color:#363a38;letter-spacing:-0.050px;-webkit-text-stroke:0;">2</div>
<div class="t" style="left:21.80px;top:266.00px;font-size:11.8px;color:#444;letter-spacing:-0.300px;transform:translateX(-50%);">4</div>
<div class="t" style="left:38.90px;top:287.00px;font-size:10.7px;color:#363a38;letter-spacing:-0.050px;-webkit-text-stroke:0;">Pierre</div>
<div class="t" style="left:242.40px;top:287.00px;font-size:10.7px;color:#363a38;letter-spacing:-0.050px;-webkit-text-stroke:0;">Curie</div>
<div class="t" style="left:382.90px;top:287.00px;font-size:10.7px;color:#363a38;letter-spacing:-0.050px;-webkit-text-stroke:0;">1859-05-15</div>
<div class="t" style="left:469.90px;top:287.00px;font-size:10.7px;color:#363a38;letter-spacing:-0.050px;-webkit-text-stroke:0;">male</div>
<div class="t" style="left:537.40px;top:287.00px;font-size:10.7px;color:#363a38;letter-spacing:-0.050px;-webkit-text-stroke:0;">1903</div>
<div class="t" style="left:624.65px;top:287.00px;font-size:10.7px;color:#363a38;letter-spacing:-0.050px;-webkit-text-stroke:0;">physics</div>
<div class="t" style="left:730.90px;top:287.00px;font-size:10.7px;color:#363a38;letter-spacing:-0.050px;-webkit-text-stroke:0;">4</div>
<div class="t" style="left:21.80px;top:286.00px;font-size:11.8px;color:#444;letter-spacing:-0.300px;transform:translateX(-50%);">5</div>
<div class="t" style="left:38.90px;top:307.00px;font-size:10.7px;color:#363a38;letter-spacing:-0.050px;-webkit-text-stroke:0;">Marie</div>
<div class="t" style="left:242.40px;top:307.00px;font-size:10.7px;color:#363a38;letter-spacing:-0.050px;-webkit-text-stroke:0;">Curie, née Sklodowska</div>
<div class="t" style="left:382.90px;top:307.00px;font-size:10.7px;color:#363a38;letter-spacing:-0.050px;-webkit-text-stroke:0;">1867-11-07</div>
<div class="t" style="left:469.90px;top:307.00px;font-size:10.7px;color:#363a38;letter-spacing:-0.050px;-webkit-text-stroke:0;">female</div>
<div class="t" style="left:537.40px;top:307.00px;font-size:10.7px;color:#363a38;letter-spacing:-0.050px;-webkit-text-stroke:0;">1903</div>
<div class="t" style="left:624.65px;top:307.00px;font-size:10.7px;color:#363a38;letter-spacing:-0.050px;-webkit-text-stroke:0;">physics</div>
<div class="t" style="left:730.90px;top:307.00px;font-size:10.7px;color:#363a38;letter-spacing:-0.050px;-webkit-text-stroke:0;">4</div>
<div class="t" style="left:21.80px;top:306.00px;font-size:11.8px;color:#444;letter-spacing:-0.300px;transform:translateX(-50%);">6</div>
<div class="t" style="left:38.90px;top:327.00px;font-size:10.7px;color:#363a38;letter-spacing:-0.050px;-webkit-text-stroke:0;">Marie</div>
<div class="t" style="left:242.40px;top:327.00px;font-size:10.7px;color:#363a38;letter-spacing:-0.050px;-webkit-text-stroke:0;">Curie, née Sklodowska</div>
<div class="t" style="left:382.90px;top:327.00px;font-size:10.7px;color:#363a38;letter-spacing:-0.050px;-webkit-text-stroke:0;">1867-11-07</div>
<div class="t" style="left:469.90px;top:327.00px;font-size:10.7px;color:#363a38;letter-spacing:-0.050px;-webkit-text-stroke:0;">female</div>
<div class="t" style="left:537.40px;top:327.00px;font-size:10.7px;color:#363a38;letter-spacing:-0.050px;-webkit-text-stroke:0;">1911</div>
<div class="t" style="left:624.65px;top:327.00px;font-size:10.7px;color:#363a38;letter-spacing:-0.050px;-webkit-text-stroke:0;">chemistry</div>
<div class="t" style="left:730.90px;top:327.00px;font-size:10.7px;color:#363a38;letter-spacing:-0.050px;-webkit-text-stroke:0;">1</div>
<div class="t" style="left:21.80px;top:326.00px;font-size:11.8px;color:#444;letter-spacing:-0.300px;transform:translateX(-50%);">7</div>
<div class="t" style="left:38.90px;top:347.00px;font-size:10.7px;color:#363a38;letter-spacing:-0.050px;-webkit-text-stroke:0;">Lord Rayleigh</div>
<div class="t" style="left:242.40px;top:347.00px;font-size:10.7px;color:#363a38;letter-spacing:-0.050px;-webkit-text-stroke:0;">(John William Strutt)</div>
<div class="t" style="left:382.90px;top:347.00px;font-size:10.7px;color:#363a38;letter-spacing:-0.050px;-webkit-text-stroke:0;">1842-11-12</div>
<div class="t" style="left:469.90px;top:347.00px;font-size:10.7px;color:#363a38;letter-spacing:-0.050px;-webkit-text-stroke:0;">male</div>
<div class="t" style="left:537.40px;top:347.00px;font-size:10.7px;color:#363a38;letter-spacing:-0.050px;-webkit-text-stroke:0;">1904</div>
<div class="t" style="left:624.65px;top:347.00px;font-size:10.7px;color:#363a38;letter-spacing:-0.050px;-webkit-text-stroke:0;">physics</div>
<div class="t" style="left:730.90px;top:347.00px;font-size:10.7px;color:#363a38;letter-spacing:-0.050px;-webkit-text-stroke:0;">1</div>
<div class="t" style="left:21.80px;top:347.00px;font-size:11.8px;color:#444;letter-spacing:-0.300px;transform:translateX(-50%);">8</div>
<div class="t" style="left:38.90px;top:368.00px;font-size:10.7px;color:#363a38;letter-spacing:-0.050px;-webkit-text-stroke:0;">Philipp Eduard Anton</div>
<div class="t" style="left:242.40px;top:368.00px;font-size:10.7px;color:#363a38;letter-spacing:-0.050px;-webkit-text-stroke:0;">von Lenard</div>
<div class="t" style="left:382.90px;top:368.00px;font-size:10.7px;color:#363a38;letter-spacing:-0.050px;-webkit-text-stroke:0;">1862-06-07</div>
<div class="t" style="left:469.90px;top:368.00px;font-size:10.7px;color:#363a38;letter-spacing:-0.050px;-webkit-text-stroke:0;">male</div>
<div class="t" style="left:537.40px;top:368.00px;font-size:10.7px;color:#363a38;letter-spacing:-0.050px;-webkit-text-stroke:0;">1905</div>
<div class="t" style="left:624.65px;top:368.00px;font-size:10.7px;color:#363a38;letter-spacing:-0.050px;-webkit-text-stroke:0;">physics</div>
<div class="t" style="left:730.90px;top:368.00px;font-size:10.7px;color:#363a38;letter-spacing:-0.050px;-webkit-text-stroke:0;">1</div>
<div class="t" style="left:21.80px;top:367.00px;font-size:11.8px;color:#444;letter-spacing:-0.300px;transform:translateX(-50%);">9</div>
<div class="t" style="left:38.90px;top:388.00px;font-size:10.7px;color:#363a38;letter-spacing:-0.050px;-webkit-text-stroke:0;">Joseph John</div>
<div class="t" style="left:242.40px;top:388.00px;font-size:10.7px;color:#363a38;letter-spacing:-0.050px;-webkit-text-stroke:0;">Thomson</div>
<div class="t" style="left:382.90px;top:388.00px;font-size:10.7px;color:#363a38;letter-spacing:-0.050px;-webkit-text-stroke:0;">1856-12-18</div>
<div class="t" style="left:469.90px;top:388.00px;font-size:10.7px;color:#363a38;letter-spacing:-0.050px;-webkit-text-stroke:0;">male</div>
<div class="t" style="left:537.40px;top:388.00px;font-size:10.7px;color:#363a38;letter-spacing:-0.050px;-webkit-text-stroke:0;">1906</div>
<div class="t" style="left:624.65px;top:388.00px;font-size:10.7px;color:#363a38;letter-spacing:-0.050px;-webkit-text-stroke:0;">physics</div>
<div class="t" style="left:730.90px;top:388.00px;font-size:10.7px;color:#363a38;letter-spacing:-0.050px;-webkit-text-stroke:0;">1</div>
<div class="t" style="left:21.80px;top:387.00px;font-size:11.8px;color:#444;letter-spacing:-0.300px;transform:translateX(-50%);">10</div>
<div class="t" style="left:38.90px;top:408.00px;font-size:10.7px;color:#363a38;letter-spacing:-0.050px;-webkit-text-stroke:0;">Albert Abraham</div>
<div class="t" style="left:242.40px;top:408.00px;font-size:10.7px;color:#363a38;letter-spacing:-0.050px;-webkit-text-stroke:0;">Michelson</div>
<div class="t" style="left:382.90px;top:408.00px;font-size:10.7px;color:#363a38;letter-spacing:-0.050px;-webkit-text-stroke:0;">1852-12-19</div>
<div class="t" style="left:469.90px;top:408.00px;font-size:10.7px;color:#363a38;letter-spacing:-0.050px;-webkit-text-stroke:0;">male</div>
<div class="t" style="left:537.40px;top:408.00px;font-size:10.7px;color:#363a38;letter-spacing:-0.050px;-webkit-text-stroke:0;">1907</div>
<div class="t" style="left:624.65px;top:408.00px;font-size:10.7px;color:#363a38;letter-spacing:-0.050px;-webkit-text-stroke:0;">physics</div>
<div class="t" style="left:730.90px;top:408.00px;font-size:10.7px;color:#363a38;letter-spacing:-0.050px;-webkit-text-stroke:0;">1</div>
<div class="t" style="left:21.80px;top:408.00px;font-size:11.8px;color:#444;letter-spacing:-0.300px;transform:translateX(-50%);">11</div>
<div class="t" style="left:38.90px;top:429.00px;font-size:10.7px;color:#363a38;letter-spacing:-0.050px;-webkit-text-stroke:0;">Gabriel</div>
<div class="t" style="left:242.40px;top:429.00px;font-size:10.7px;color:#363a38;letter-spacing:-0.050px;-webkit-text-stroke:0;">Lippmann</div>
<div class="t" style="left:382.90px;top:429.00px;font-size:10.7px;color:#363a38;letter-spacing:-0.050px;-webkit-text-stroke:0;">1845-08-16</div>
<div class="t" style="left:469.90px;top:429.00px;font-size:10.7px;color:#363a38;letter-spacing:-0.050px;-webkit-text-stroke:0;">male</div>
<div class="t" style="left:537.40px;top:429.00px;font-size:10.7px;color:#363a38;letter-spacing:-0.050px;-webkit-text-stroke:0;">1908</div>
<div class="t" style="left:624.65px;top:429.00px;font-size:10.7px;color:#363a38;letter-spacing:-0.050px;-webkit-text-stroke:0;">physics</div>
<div class="t" style="left:730.90px;top:429.00px;font-size:10.7px;color:#363a38;letter-spacing:-0.050px;-webkit-text-stroke:0;">1</div>
<div class="t" style="left:21.80px;top:428.00px;font-size:11.8px;color:#444;letter-spacing:-0.300px;transform:translateX(-50%);">12</div>
<div class="t" style="left:38.90px;top:449.00px;font-size:10.7px;color:#363a38;letter-spacing:-0.050px;-webkit-text-stroke:0;">Guglielmo</div>
<div class="t" style="left:242.40px;top:449.00px;font-size:10.7px;color:#363a38;letter-spacing:-0.050px;-webkit-text-stroke:0;">Marconi</div>
<div class="t" style="left:382.90px;top:449.00px;font-size:10.7px;color:#363a38;letter-spacing:-0.050px;-webkit-text-stroke:0;">1874-04-25</div>
<div class="t" style="left:469.90px;top:449.00px;font-size:10.7px;color:#363a38;letter-spacing:-0.050px;-webkit-text-stroke:0;">male</div>
<div class="t" style="left:537.40px;top:449.00px;font-size:10.7px;color:#363a38;letter-spacing:-0.050px;-webkit-text-stroke:0;">1909</div>
<div class="t" style="left:624.65px;top:449.00px;font-size:10.7px;color:#363a38;letter-spacing:-0.050px;-webkit-text-stroke:0;">physics</div>
<div class="t" style="left:730.90px;top:449.00px;font-size:10.7px;color:#363a38;letter-spacing:-0.050px;-webkit-text-stroke:0;">2</div>
<div class="t" style="left:21.80px;top:448.00px;font-size:11.8px;color:#444;letter-spacing:-0.300px;transform:translateX(-50%);">13</div>
<div class="t" style="left:38.90px;top:469.00px;font-size:10.7px;color:#363a38;letter-spacing:-0.050px;-webkit-text-stroke:0;">Karl Ferdinand</div>
<div class="t" style="left:242.40px;top:469.00px;font-size:10.7px;color:#363a38;letter-spacing:-0.050px;-webkit-text-stroke:0;">Braun</div>
<div class="t" style="left:382.90px;top:469.00px;font-size:10.7px;color:#363a38;letter-spacing:-0.050px;-webkit-text-stroke:0;">1850-06-06</div>
<div class="t" style="left:469.90px;top:469.00px;font-size:10.7px;color:#363a38;letter-spacing:-0.050px;-webkit-text-stroke:0;">male</div>
<div class="t" style="left:537.40px;top:469.00px;font-size:10.7px;color:#363a38;letter-spacing:-0.050px;-webkit-text-stroke:0;">1909</div>
<div class="t" style="left:624.65px;top:469.00px;font-size:10.7px;color:#363a38;letter-spacing:-0.050px;-webkit-text-stroke:0;">physics</div>
<div class="t" style="left:730.90px;top:469.00px;font-size:10.7px;color:#363a38;letter-spacing:-0.050px;-webkit-text-stroke:0;">2</div>
<div class="t" style="left:21.80px;top:468.00px;font-size:11.8px;color:#444;letter-spacing:-0.300px;transform:translateX(-50%);">14</div>
<div class="t" style="left:38.90px;top:489.00px;font-size:10.7px;color:#363a38;letter-spacing:-0.050px;-webkit-text-stroke:0;">Johannes Diderik</div>
<div class="t" style="left:242.40px;top:489.00px;font-size:10.7px;color:#363a38;letter-spacing:-0.050px;-webkit-text-stroke:0;">van der Waals</div>
<div class="t" style="left:382.90px;top:489.00px;font-size:10.7px;color:#363a38;letter-spacing:-0.050px;-webkit-text-stroke:0;">1837-11-23</div>
<div class="t" style="left:469.90px;top:489.00px;font-size:10.7px;color:#363a38;letter-spacing:-0.050px;-webkit-text-stroke:0;">male</div>
<div class="t" style="left:537.40px;top:489.00px;font-size:10.7px;color:#363a38;letter-spacing:-0.050px;-webkit-text-stroke:0;">1910</div>
<div class="t" style="left:624.65px;top:489.00px;font-size:10.7px;color:#363a38;letter-spacing:-0.050px;-webkit-text-stroke:0;">physics</div>
<div class="t" style="left:730.90px;top:489.00px;font-size:10.7px;color:#363a38;letter-spacing:-0.050px;-webkit-text-stroke:0;">1</div>
<div class="t" style="left:21.80px;top:489.00px;font-size:11.8px;color:#444;letter-spacing:-0.300px;transform:translateX(-50%);">15</div>
<div class="t" style="left:834.30px;top:160.00px;font-size:20px;color:#3f8a68;transform:scaleX(0.8927);-webkit-text-stroke:0.45px #fff;">Query Settings</div>
<div class="t" style="left:839.60px;top:198.00px;font-size:12.2px;color:#1e6b45;font-weight:bold;transform:scaleX(0.8503);">PROPERTIES</div>
<div class="t" style="left:839.30px;top:218.00px;font-size:11.5px;color:#444;transform:scaleX(0.9939);">Name</div>
<div class="t" style="left:844.70px;top:238.00px;font-size:11.5px;color:#444;transform:scaleX(0.9491);">Query1</div>
<div class="t" style="left:839.30px;top:262.00px;font-size:11.5px;color:#3f6da8;transform:scaleX(0.9958);">All Properties</div>
<div class="t" style="left:839.60px;top:289.00px;font-size:12.2px;color:#1e6b45;font-weight:bold;transform:scaleX(0.8610);">APPLIED STEPS</div>
<div class="t" style="left:859.80px;top:315.00px;font-size:11.3px;color:#27694d;transform:scaleX(0.9694);">Source</div>
<div class="t" style="left:859.80px;top:334.00px;font-size:11.3px;color:#27694d;transform:scaleX(1.0272);">Converted to Table</div>
<div class="t" style="left:859.80px;top:353.00px;font-size:11.3px;color:#27694d;transform:scaleX(0.9811);">Expand Value</div>
<div class="t" style="left:859.80px;top:372.00px;font-size:11.3px;color:#27694d;transform:scaleX(0.9921);">Expand Value1</div>
<div class="t" style="left:859.80px;top:391.00px;font-size:11.3px;color:#27694d;transform:scaleX(0.9735);">Expand prizes</div>
<div class="t" style="left:859.80px;top:410.00px;font-size:11.3px;color:#27694d;transform:scaleX(0.9721);">Expand prizes1</div>
<div class="t" style="left:859.80px;top:430.00px;font-size:11.3px;color:#27694d;transform:scaleX(1.0041);">Removed Other Col...</div>
<div class="t" style="left:859.80px;top:449.00px;font-size:11.3px;color:#3a4a40;transform:scaleX(0.9896);">Renamed Columns</div>
<div class="a" style="left:195.2px;top:88.9px;width:58.9px;height:31.8px;border:4.5px solid #e84541"></div>
<svg class="a" style="left:0;top:0;filter:drop-shadow(0.8px 1.2px 1px rgba(60,40,40,0.35))" width="1024" height="503" viewBox="0 0 1024 503">
<line x1="446.6" y1="219.3" x2="272" y2="124.4" stroke="#e84541" stroke-width="7.8" stroke-linecap="round"/>
<path d="M256.6 116 L280.4 116.8 L269.6 135 Z" fill="#e84541" stroke="#e84541" stroke-width="1.4" stroke-linejoin="round"/>
</svg>
</body></html>
